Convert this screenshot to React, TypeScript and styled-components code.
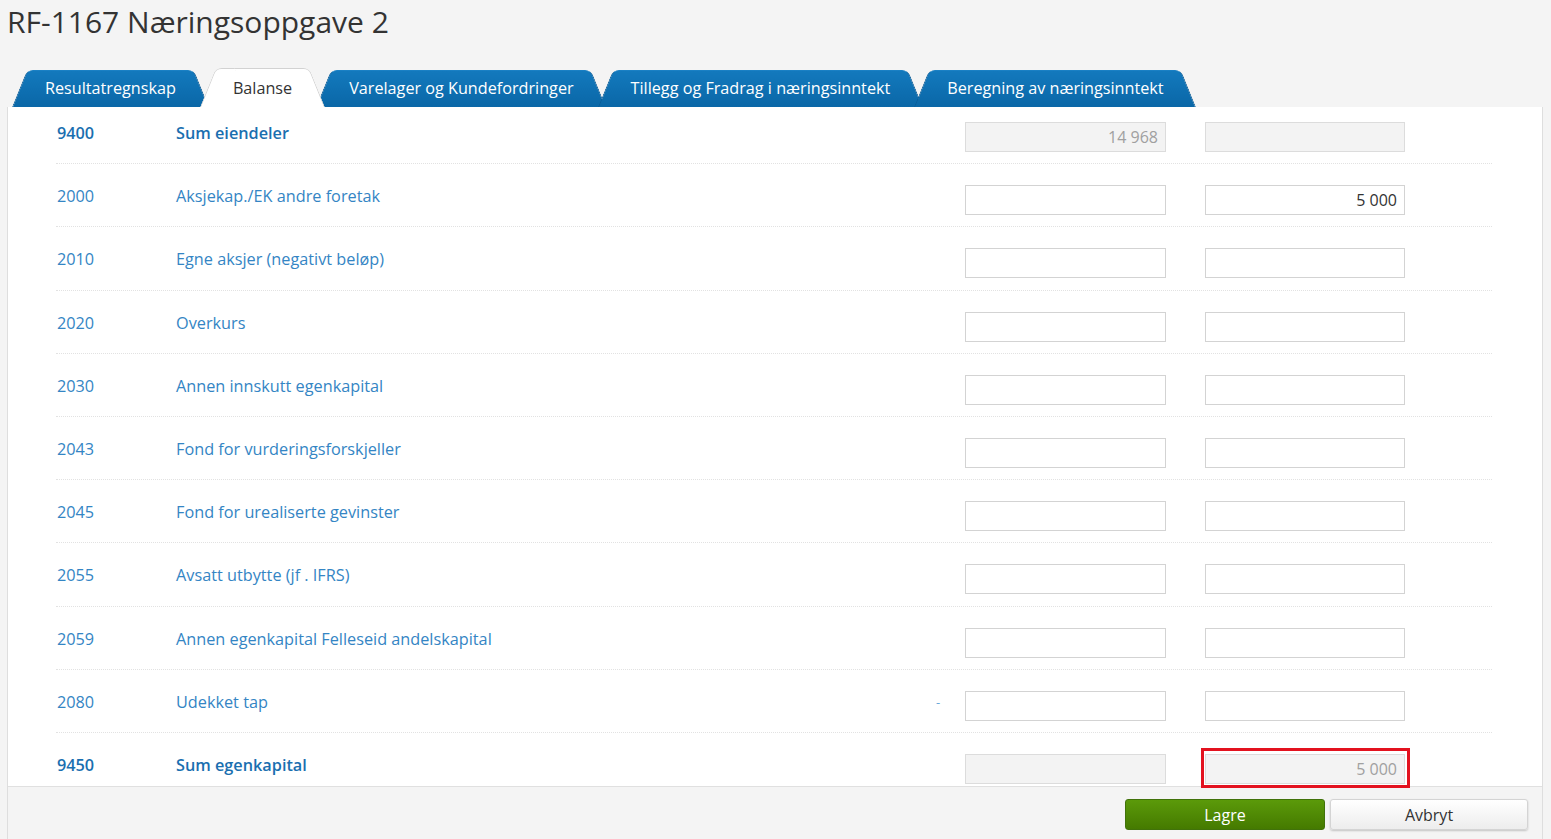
import styled, { createGlobalStyle } from "styled-components";

const GlobalStyle = createGlobalStyle`
  html, body {
    margin: 0;
    padding: 0;
    background: #f4f4f4;
    font-family: "Open Sans", "Liberation Sans", sans-serif;
  }
`;

interface Line {
  code: string;
  text: string;
  sum?: boolean;
  note?: string;
  first?: string;
  second?: string;
  mark?: boolean;
}

const lines: Line[] = [
  { code: "9400", text: "Sum eiendeler", sum: true, first: "14 968", second: "" },
  { code: "2000", text: "Aksjekap./EK andre foretak", second: "5 000" },
  { code: "2010", text: "Egne aksjer (negativt beløp)" },
  { code: "2020", text: "Overkurs" },
  { code: "2030", text: "Annen innskutt egenkapital" },
  { code: "2043", text: "Fond for vurderingsforskjeller" },
  { code: "2045", text: "Fond for urealiserte gevinster" },
  { code: "2055", text: "Avsatt utbytte (jf . IFRS)" },
  { code: "2059", text: "Annen egenkapital Felleseid andelskapital" },
  { code: "2080", text: "Udekket tap", note: "-" },
  { code: "9450", text: "Sum egenkapital", sum: true, first: "", second: "5 000", mark: true },
];

const tabs = [
  "Resultatregnskap",
  "Balanse",
  "Varelager og Kundefordringer",
  "Tillegg og Fradrag i næringsinntekt",
  "Beregning av næringsinntekt",
];

function App() {
  return (
    <Page>
      <GlobalStyle />
      <Title>RF-1167 Næringsoppgave 2</Title>
      <TabRow>
        {tabs.map((t, i) => (
          <Tab key={t} $active={i === 1}>
            {t}
          </Tab>
        ))}
      </TabRow>
      <Frame>
        <Panel>
          <List>
            {lines.map((l, i) => (
              <Row key={l.code} $last={i === lines.length - 1}>
                <Code $sum={l.sum}>{l.code}</Code>
                <Desc $sum={l.sum}>{l.text}</Desc>
                <Note>{l.note}</Note>
                <Field
                  $w={201}
                  disabled={l.sum}
                  defaultValue={l.first ?? ""}
                />
                <Gap />
                <Mark $on={l.mark}>
                  <Field
                    $w={200}
                    disabled={l.sum}
                    defaultValue={l.second ?? ""}
                  />
                </Mark>
              </Row>
            ))}
          </List>
        </Panel>
        <Footer>
          <SaveButton>Lagre</SaveButton>
          <CancelButton>Avbryt</CancelButton>
        </Footer>
      </Frame>
    </Page>
  );
}

const Page = styled.div`
  padding: 0 8px 0 7px;
  height: 839px;
  box-sizing: border-box;
  display: flex;
  flex-direction: column;
  overflow: hidden;
`;

const Title = styled.h1`
  margin: 2px 0 0;
  font-size: 30px;
  line-height: 40px;
  font-weight: 400;
  color: #333;
`;

const TabRow = styled.div`
  display: flex;
  align-items: flex-end;
  height: 39px;
  margin-top: 26px;
  padding-left: 5px;
`;

const Tab = styled.div<{ $active?: boolean }>`
  position: relative;
  z-index: ${(p) => (p.$active ? 3 : 1)};
  height: ${(p) => (p.$active ? 39 : 37)}px;
  line-height: 37px;
  padding: ${(p) => (p.$active ? "2px" : "0")} 33px 0;
  box-sizing: border-box;
  margin-left: -9px;
  font-size: 16.2px;
  white-space: nowrap;
  color: ${(p) => (p.$active ? "#333" : "#fff")};
  cursor: pointer;

  &:first-child {
    margin-left: 0;
  }

  &::before,
  &::after {
    content: "";
    position: absolute;
    top: 0;
    bottom: 0;
    width: 60%;
    z-index: -1;
    box-sizing: border-box;
    background: ${(p) =>
      p.$active ? "#fff" : "linear-gradient(#1379bd, #0a67a7)"};
    border-top: 1px solid ${(p) => (p.$active ? "#d2d2d2" : "#1a80c4")};
  }

  &::before {
    left: 0;
    border-radius: 6px 0 0 0;
    transform: skewX(-22deg);
    transform-origin: bottom left;
    border-left: 1px solid ${(p) => (p.$active ? "#d2d2d2" : "#0b5c96")};
  }

  &::after {
    right: 0;
    border-radius: 0 6px 0 0;
    transform: skewX(22deg);
    transform-origin: bottom right;
    border-right: 1px solid ${(p) => (p.$active ? "#d2d2d2" : "#0b5c96")};
  }
`;

const Frame = styled.div`
  border-left: 1px solid #dedede;
  border-right: 1px solid #dedede;
  flex: 1;
  display: flex;
  flex-direction: column;
`;

const Panel = styled.div`
  height: 679px;
  background: #fff;
  display: flex;
  flex-direction: column;
`;

const List = styled.div`
  margin: -6px 50px 0 48px;
`;

const Row = styled.div<{ $last?: boolean }>`
  display: flex;
  align-items: flex-start;
  height: 63.2px;
  box-sizing: border-box;
  padding: 21px 87px 0 0;
  border-bottom: ${(p) => (p.$last ? "none" : "1px dotted #e2e2e2")};
`;

const Code = styled.div<{ $sum?: boolean }>`
  width: 120px;
  padding-left: 1px;
  box-sizing: border-box;
  font-size: 16.25px;
  line-height: 22px;
  font-weight: ${(p) => (p.$sum ? 600 : 400)};
  color: ${(p) => (p.$sum ? "#1a6fb0" : "#3485c4")};
`;

const Desc = styled(Code)`
  flex: 1;
  width: auto;
  padding-left: 0;
`;

const Note = styled.div`
  width: 29px;
  font-size: 13px;
  line-height: 22px;
  color: #6aa9d9;
`;

const Field = styled.input<{ $w: number }>`
  width: ${(p) => p.$w}px;
  height: 30px;
  box-sizing: border-box;
  margin: 0;
  padding: 0 7px;
  border: 1px solid #d3d3d3;
  border-radius: 0;
  background: #fff;
  font-family: "Open Sans", "Liberation Sans", sans-serif;
  font-size: 16px;
  color: #333;
  text-align: right;
  outline: none;

  &:disabled {
    background: #f3f3f3;
    border-color: #dcdcdc;
    color: #a0a0a0;
    -webkit-text-fill-color: #a0a0a0;
    opacity: 1;
  }
`;

const Gap = styled.div`
  width: 39px;
`;

const Mark = styled.div<{ $on?: boolean }>`
  position: relative;
  display: flex;

  &::after {
    content: "";
    display: ${(p) => (p.$on ? "block" : "none")};
    position: absolute;
    top: -6px;
    left: -4px;
    right: -5px;
    bottom: -4px;
    border: 3px solid #e3121f;
    pointer-events: none;
  }
`;

const Footer = styled.div`
  flex: 1;
  border-top: 1px solid #e0e0e0;
  background: #f4f4f4;
  display: flex;
  justify-content: flex-end;
  align-items: flex-start;
  gap: 5px;
  padding: 12px 14px 0 0;
`;

const Button = styled.button`
  height: 31px;
  border-radius: 3px;
  font-family: "Open Sans", "Liberation Sans", sans-serif;
  font-size: 16px;
  cursor: pointer;
  padding: 0;
`;

const SaveButton = styled(Button)`
  width: 200px;
  color: #fff;
  border: 1px solid #41720a;
  background: linear-gradient(#5b9a0a, #457a00);
`;

const CancelButton = styled(Button)`
  width: 198px;
  color: #333;
  border: 1px solid #d4d4d4;
  background: linear-gradient(#ffffff, #ededed);
  box-shadow: 0 1px 2px rgba(0, 0, 0, 0.2);
`;

export default App;
